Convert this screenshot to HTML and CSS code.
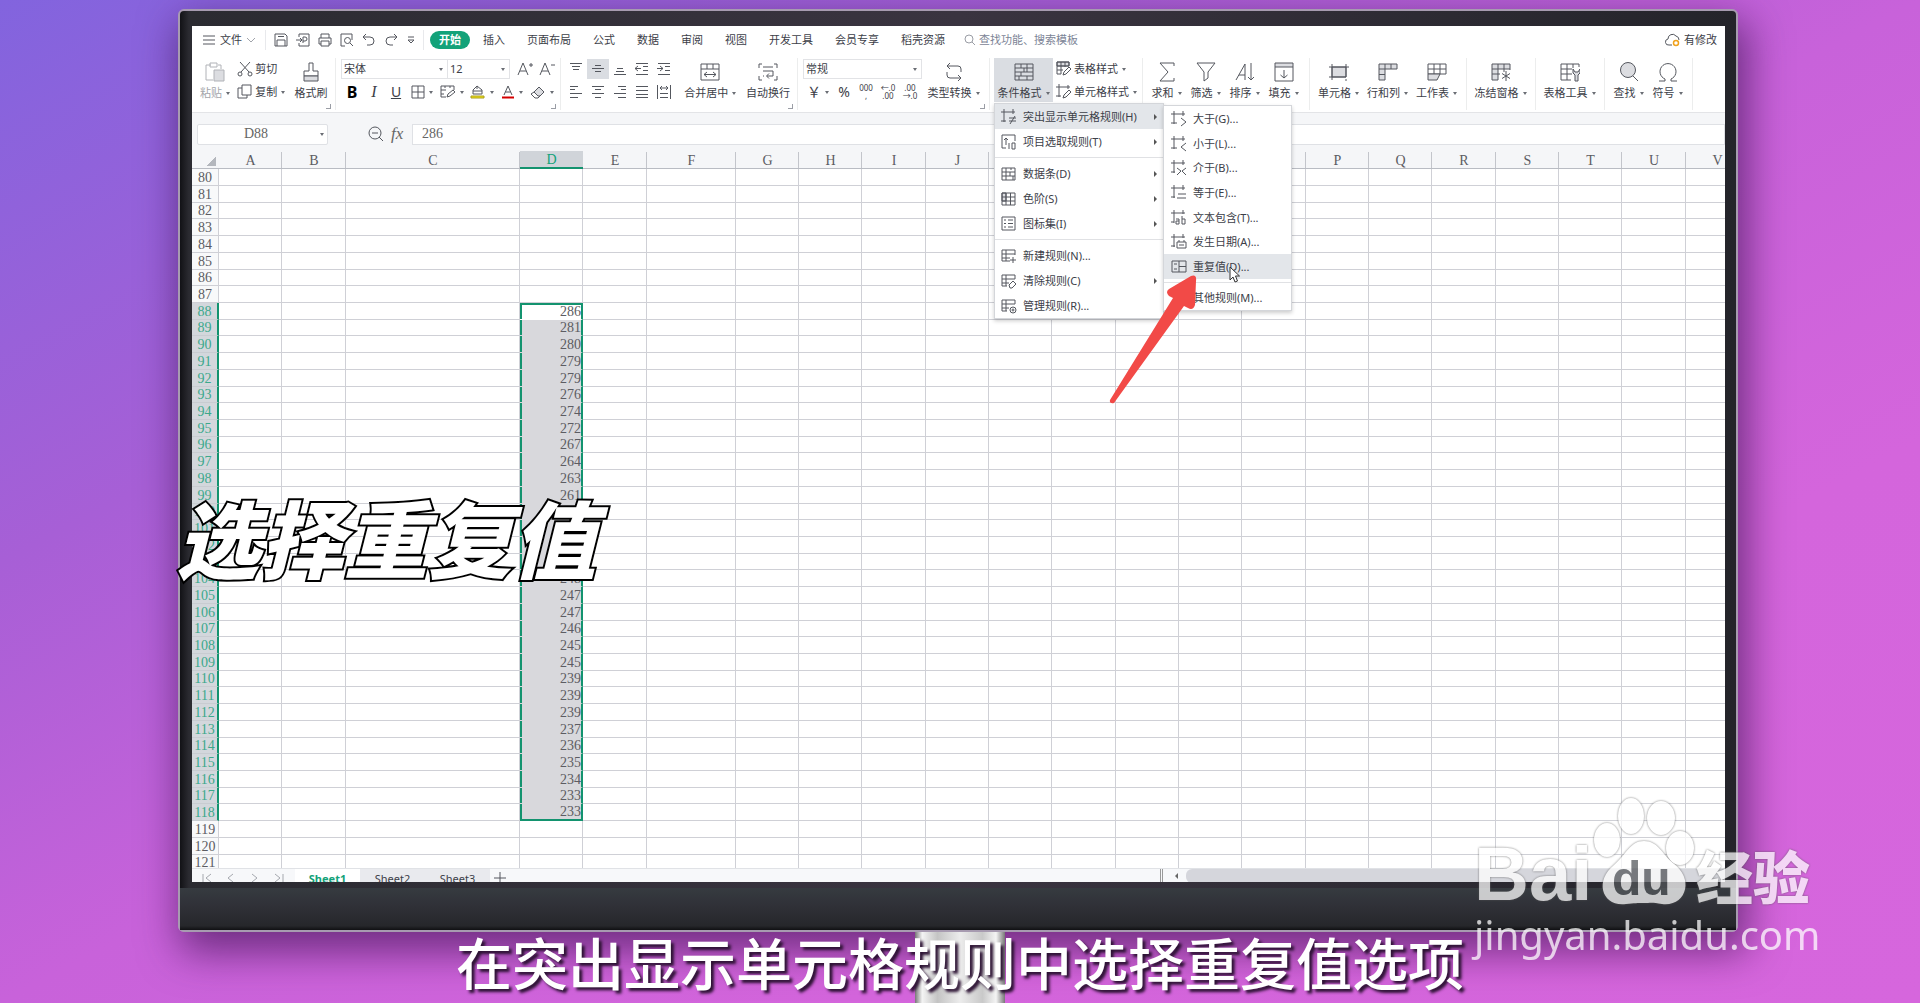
FILE: index.html
```html
<!DOCTYPE html>
<html lang="zh-CN">
<head>
<meta charset="utf-8">
<title>突出显示单元格规则</title>
<link rel="stylesheet" href="styles.css">
</head>
<body>
<svg class="sprite" aria-hidden="true">
  <symbol id="menu" viewBox="0 0 14 14"><path d="M1 3h12M1 7h12M1 11h12"/></symbol>
  <symbol id="chev" viewBox="0 0 10 10"><path d="M1 3l4 4 4-4"/></symbol>
  <symbol id="save" viewBox="0 0 14 14"><path d="M1 1h10l2 2v10H1zM3 13V7h8v6M4 3.500h6"/></symbol>
  <symbol id="pdf" viewBox="0 0 14 14"><path d="M3 4V1h10v12H3v-3M0 7h6M4 5l2 2-2 2M7 10V4h2a2 2 0 010 4H7"/></symbol>
  <symbol id="print" viewBox="0 0 14 14"><path d="M3 5V1h8v4M3 11H1V5h12v6h-2M3 8h8v5H3z"/></symbol>
  <symbol id="preview" viewBox="0 0 14 14"><path d="M5 13H1V1h11v6"/><circle cx="7.500" cy="7.500" r="3"/><path d="M10 10l3 3"/></symbol>
  <symbol id="undo" viewBox="0 0 14 14"><path d="M4 1L1 4l3 3M1 4h7a4 4 0 010 8H5"/></symbol>
  <symbol id="redo" viewBox="0 0 14 14"><path d="M10 1l3 3-3 3M13 4H6a4 4 0 000 8h3"/></symbol>
  <symbol id="more" viewBox="0 0 10 10"><path d="M2 2h6M2 5l3 3 3-3z"/></symbol>
  <symbol id="search" viewBox="0 0 12 12"><circle cx="5" cy="5" r="4"/><path d="M8 8l3 3"/></symbol>
  <symbol id="cloud" viewBox="0 0 16 14"><path d="M7 12H4a3 3 0 01-1-6 4.500 4.500 0 018-3 4 4 0 013 4"/><circle cx="11" cy="10" r="2.500" stroke="#f0a21c" stroke-width="1.500"/></symbol>
  <symbol id="paste" viewBox="0 0 20 20"><path d="M6 3H1v15h7M13 3h3v4M5 1h7v4H5z"/><path class="shade" d="M9 8h10v11H9z"/></symbol>
  <symbol id="cut" viewBox="0 0 16 16"><path d="M3 1l9 10M13 1L4 11"/><circle cx="3" cy="13" r="2"/><circle cx="13" cy="13" r="2"/></symbol>
  <symbol id="copy" viewBox="0 0 16 16"><path d="M5 1h9v10H5zM5 4H1v10h9v-3"/></symbol>
  <symbol id="brush" viewBox="0 0 20 20"><path d="M8 1h4v8h5v5H3V9h5z"/><path class="shade" d="M3 14h14v5H3z"/></symbol>
  <symbol id="table" viewBox="0 0 14 14"><path d="M1 1h12v12H1zM7 1v12M1 7h12"/></symbol>
  <symbol id="cellpen" viewBox="0 0 16 14"><path d="M6 12H1V1h13v4M1 5h5M5 1v2M10 1v2M1 9h3M7 12l1-3 5-4 2 2-5 4z"/></symbol>
  <symbol id="fill" viewBox="0 0 16 14"><path d="M3 8V5l4-4 5 4v4H3zM7 1v3M3 6h9"/><path d="M1 11h13v2H1z" fill="#f5e614" stroke="#a99d20"/></symbol>
  <symbol id="fontcolor" viewBox="0 0 14 14"><path d="M3 10l4-9 4 9M4.500 7h5"/><path d="M1 12.500h12" stroke="#d40000" stroke-width="2"/></symbol>
  <symbol id="eraser" viewBox="0 0 16 14"><path class="shade" d="M4 7l5-5 5 5-4 4H8z"/><path d="M4 7l-3 2 4 4h3l2-2"/></symbol>
  <symbol id="bigA" viewBox="0 0 16 14"><path d="M1 13L6 1l5 12M3 9h6M12 3h4M14 1v4"/></symbol>
  <symbol id="smallA" viewBox="0 0 16 14"><path d="M1 13L6 1l5 12M3 9h6M12 3h4"/></symbol>
  <symbol id="al-top" viewBox="0 0 14 14"><path d="M1 1.500h12M3 4.500h8M4 7.500h6"/></symbol>
  <symbol id="al-mid" viewBox="0 0 14 14"><path d="M4 3.500h6M1 6.500h12M4 9.500h6"/></symbol>
  <symbol id="al-bot" viewBox="0 0 14 14"><path d="M4 6.500h6M3 9.500h8M1 12.500h12"/></symbol>
  <symbol id="ind-l" viewBox="0 0 14 14"><path d="M1 1.500h12M8 4.500h5M8 8.500h5M1 12.500h12M0 6.500h6M3 4L0 6.500 3 9"/></symbol>
  <symbol id="ind-r" viewBox="0 0 14 14"><path d="M1 1.500h12M8 4.500h5M8 8.500h5M1 12.500h12M0 6.500h6M3 4l3 2.500L3 9"/></symbol>
  <symbol id="left" viewBox="0 0 14 14"><path d="M1 1.500h8M1 4.500h5M1 8.500h12M1 12.500h8"/></symbol>
  <symbol id="center" viewBox="0 0 14 14"><path d="M1 1.500h12M4 4.500h6M1 8.500h12M4 12.500h6"/></symbol>
  <symbol id="right" viewBox="0 0 14 14"><path d="M5 1.500h8M8 4.500h5M1 8.500h12M5 12.500h8"/></symbol>
  <symbol id="just" viewBox="0 0 14 14"><path d="M1 1.500h12M1 5.500h12M1 9.500h12M1 12.500h12"/></symbol>
  <symbol id="dist" viewBox="0 0 14 14"><path d="M.5 0v14M13.500 0v14M3 3h8M5 1L3 3l2 2M9 1l2 2-2 2M3 8.500h8M3 12.500h8"/></symbol>
  <symbol id="merge" viewBox="0 0 20 20"><path d="M1 2h18v16H1zM1 7h18M7 2v5M13 2v5M4 12.500h12M7 10l-3 2.500L7 15M13 10l3 2.500-3 2.500"/></symbol>
  <symbol id="wrap" viewBox="0 0 20 20"><path d="M1 6V2h3M16 2h3v4M1 14v4h3M16 18h3v-4M5 5h10M5 9h10v5H9M11 11.500L8.500 14l2.500 2.500M5 14h1"/></symbol>
  <symbol id="convert" viewBox="0 0 20 20"><path d="M6 1L3 4l3 3M3 4h11a3 3 0 013 3v3M14 19l3-3-3-3M17 16H6a3 3 0 01-3-3v-3"/></symbol>
  <symbol id="cond" viewBox="0 0 20 20"><path d="M1 2h18v16H1zM1 6h18M1 10h18M1 14h18M7 2v4M13 2v8M7 10v4M13 14v4M10 6v4M5 14v4"/></symbol>
  <symbol id="tstyle" viewBox="0 0 16 16"><path class="shade" d="M1 1h12v4H1z"/><path d="M5 13H1V1h12v4M1 5h12M1 9h6M5 1v12M9 1v5M7 14l1-3 5-5 2 2-5 5z"/></symbol>
  <symbol id="cstyle" viewBox="0 0 16 16"><path d="M0 3h14M3 0v13M12 1v4M0 12h5M7 14l1-3 5-5 2 2-5 5z"/></symbol>
  <symbol id="sum" viewBox="0 0 20 20"><path d="M17 4V1H3l8 9-8 9h14v-3"/></symbol>
  <symbol id="filter" viewBox="0 0 20 20"><path d="M1 1h18l-7 9v6l-4 3v-9z"/></symbol>
  <symbol id="sort" viewBox="0 0 20 20"><path d="M1 18L10 2v16M4 13h6M16 1v17M13 15l3 3 3-3"/></symbol>
  <symbol id="down" viewBox="0 0 20 20"><path class="shade" d="M1 1h18v4H1z"/><path d="M1 5v14h18V5M10 8v8M6.500 13l3.500 3 3.500-3"/></symbol>
  <symbol id="cell" viewBox="0 0 20 20"><path class="shade" d="M3 5h14v10H3z"/><path d="M0 5h20M0 15h17M3 2v16M17 2v13M17 17v2"/></symbol>
  <symbol id="rowcol" viewBox="0 0 20 20"><path class="shade" d="M1 2h18v5H7v11H1z"/><path d="M1 7h6V2M13 2v5M1 12.500h6"/></symbol>
  <symbol id="sheet" viewBox="0 0 20 20"><path d="M1 2h18v10H1zM7 2v10M13 2v10M1 7h18"/><path class="shade" d="M1 12h12l-3 6H1z"/></symbol>
  <symbol id="freeze" viewBox="0 0 20 20"><path class="shade" d="M1 2h18v5H7v11H1z"/><path d="M1 7h6V2M13 2v8M1 12h8M19 7v1M15 9v10M11 11.500l8 5M19 11.500l-8 5"/></symbol>
  <symbol id="ttool" viewBox="0 0 20 20"><path d="M11 18H1V2h18v3M1 7h11M1 12h11M7 2v16M13 2v4"/><path class="shade" d="M13 7v4l2 2v6h3v-6l2-2V7l-2 3h-3z"/></symbol>
  <symbol id="find" viewBox="0 0 20 20"><circle class="shade" cx="9" cy="8" r="7.500"/><path d="M14 14l5 5"/></symbol>
  <symbol id="omega" viewBox="0 0 20 20"><path d="M1 19h6v-2a8 8 0 116 0v2h6"/></symbol>
  <symbol id="zoomout" viewBox="0 0 16 16"><circle cx="7" cy="7" r="6"/><path d="M11 11l4 4M4 7h6"/></symbol>
  <symbol id="m-hl" viewBox="0 0 16 16"><path d="M0 3h14M3 0v13M12 0v5M0 12h5M8 9h7M8 12h7M14 7l-5 8"/></symbol>
  <symbol id="m-top" viewBox="0 0 16 16"><path d="M5 14H1V1h13v6M5 11V4M3 6l2-2 2 2M8 9v6M11 9h3v6h-3z"/></symbol>
  <symbol id="m-bar" viewBox="0 0 16 16"><path d="M1 2h13v12H1zM1 6h13M1 10h13M5 2v12M9 6v4M10 2v2M12 10v4"/></symbol>
  <symbol id="m-scale" viewBox="0 0 16 16"><path class="shade" d="M1 2h4v8H1z"/><path d="M1 2h13v12H1zM1 6h13M1 10h13M5 2v12M9.500 2v12"/></symbol>
  <symbol id="m-icons" viewBox="0 0 16 16"><path d="M1 1h13v13H1zM3 4h2M3 7.500h2M3 11h2M7 4h5M7 7.500h5M7 11h5"/></symbol>
  <symbol id="m-new" viewBox="0 0 16 16"><path d="M9 13H1V2h13v5M1 6h13M1 10h8M5 2v11M12 9v6M9 12h6"/></symbol>
  <symbol id="m-clear" viewBox="0 0 16 16"><path d="M6 13H1V2h13v4M1 6h13M1 10h7M5 2v11M8 12l4-4 3 3-4 4H9z"/></symbol>
  <symbol id="m-mgr" viewBox="0 0 16 16"><path d="M6 13H1V2h13v4M1 6h13M1 10h7M5 2v11"/><circle cx="12" cy="12" r="3"/><circle cx="12" cy="12" r="1"/></symbol>
  <symbol id="s-gt" viewBox="0 0 16 16"><path d="M0 3h14M3 0v13M12 0v5M0 12h6M10 7l5 4-5 4"/></symbol>
  <symbol id="s-lt" viewBox="0 0 16 16"><path d="M0 3h14M3 0v13M12 0v5M0 12h6M15 7l-5 4 5 4"/></symbol>
  <symbol id="s-bt" viewBox="0 0 16 16"><path d="M0 3h14M3 0v13M12 0v5M0 12h4M6 8l4 3-4 4M15 8l-4 3 4 4"/></symbol>
  <symbol id="s-eq" viewBox="0 0 16 16"><path d="M0 3h14M3 0v13M12 0v5M0 12h4M7 9h8M6 13h9"/></symbol>
  <symbol id="s-ab" viewBox="0 0 16 16"><path d="M0 3h14M3 0v13M12 0v4M0 12h3M5 9h3v5H5v-3h3M11 6v8h3V9h-3"/></symbol>
  <symbol id="s-date" viewBox="0 0 16 16"><path d="M0 3h14M3 0v13M12 0v4M0 12h4M6 8h9v6H6zM8 6v2M13 6v2M8 11h5"/></symbol>
  <symbol id="s-dup" viewBox="0 0 16 16"><path d="M1 2h14v11H1zM8 2v11M8 7.500h7M3 5h3M3 10h3"/></symbol>
</svg>

<main class="stage">
  <section class="monitor">
    <div class="screen">
      <header class="tabbar">
        <button class="file"><svg class="i14"><use href="#menu"/></svg>文件<svg class="i10 dim"><use href="#chev"/></svg></button>
        <div class="quick">
          <button aria-label="保存"><svg class="i14"><use href="#save"/></svg></button>
          <button aria-label="输出为PDF"><svg class="i14"><use href="#pdf"/></svg></button>
          <button aria-label="打印"><svg class="i14"><use href="#print"/></svg></button>
          <button aria-label="打印预览"><svg class="i14"><use href="#preview"/></svg></button>
          <button aria-label="撤销"><svg class="i14"><use href="#undo"/></svg></button>
          <button aria-label="恢复"><svg class="i14"><use href="#redo"/></svg></button>
          <button aria-label="更多"><svg class="i10"><use href="#more"/></svg></button>
        </div>
        <nav class="tabs">
          <button class="active">开始</button><button>插入</button><button>页面布局</button><button>公式</button><button>数据</button><button>审阅</button><button>视图</button><button>开发工具</button><button>会员专享</button><button>稻壳资源</button>
        </nav>
        <label class="search"><svg class="i12"><use href="#search"/></svg><input type="text" placeholder="查找功能、搜索模板" aria-label="查找功能、搜索模板"></label>
        <button class="changed"><svg class="cloud"><use href="#cloud"/></svg>有修改</button>
      </header>

      <div class="ribbon">
        <div class="group g-clip corner">
          <button class="big w2 muted"><svg class="i20"><use href="#paste"/></svg><span class="drop">粘贴</span></button>
          <div class="rows">
            <button class="small"><svg class="i16"><use href="#cut"/></svg>剪切</button>
            <button class="small"><svg class="i16"><use href="#copy"/></svg><span class="drop">复制</span></button>
          </div>
          <button class="big w3"><svg class="i20"><use href="#brush"/></svg><span>格式刷</span></button>
        </div>
        <div class="group g-font corner">
          <div class="rows">
            <div class="line">
              <label class="pick font"><select aria-label="字体"><option>宋体</option></select></label><label class="pick size"><select aria-label="字号"><option>12</option></select></label>
              <button class="tool a-up" aria-label="增大字号"><svg class="i16x14"><use href="#bigA"/></svg></button>
              <button class="tool" aria-label="减小字号"><svg class="i16x14"><use href="#smallA"/></svg></button>
            </div>
            <div class="line">
              <button class="tool bold">B</button><button class="tool italic">I</button><button class="tool under">U</button>
              <button class="tool drop w30" aria-label="边框"><svg class="i14"><use href="#table"/></svg></button>
              <button class="tool drop w30" aria-label="单元格样式"><svg class="i16x14"><use href="#cellpen"/></svg></button>
              <button class="tool drop w30" aria-label="填充颜色"><svg class="i16x14"><use href="#fill"/></svg></button>
              <button class="tool drop w30" aria-label="字体颜色"><svg class="i14"><use href="#fontcolor"/></svg></button>
              <button class="tool drop w30" aria-label="清除"><svg class="i16x14"><use href="#eraser"/></svg></button>
            </div>
          </div>
        </div>
        <div class="group g-align corner">
          <div class="rows">
            <div class="line">
              <button class="tool" aria-label="顶端对齐"><svg class="i14"><use href="#al-top"/></svg></button>
              <button class="tool on" aria-label="垂直居中"><svg class="i14"><use href="#al-mid"/></svg></button>
              <button class="tool" aria-label="底端对齐"><svg class="i14"><use href="#al-bot"/></svg></button>
              <button class="tool" aria-label="减少缩进"><svg class="i14"><use href="#ind-l"/></svg></button>
              <button class="tool" aria-label="增加缩进"><svg class="i14"><use href="#ind-r"/></svg></button>
            </div>
            <div class="line">
              <button class="tool" aria-label="左对齐"><svg class="i14"><use href="#left"/></svg></button>
              <button class="tool" aria-label="居中"><svg class="i14"><use href="#center"/></svg></button>
              <button class="tool" aria-label="右对齐"><svg class="i14"><use href="#right"/></svg></button>
              <button class="tool" aria-label="两端对齐"><svg class="i14"><use href="#just"/></svg></button>
              <button class="tool" aria-label="分散对齐"><svg class="i14"><use href="#dist"/></svg></button>
            </div>
          </div>
          <button class="big w4"><svg class="i20"><use href="#merge"/></svg><span class="drop">合并居中</span></button>
          <button class="big w4"><svg class="i20"><use href="#wrap"/></svg><span>自动换行</span></button>
        </div>
        <div class="group g-num corner">
          <div class="rows">
            <div class="line"><label class="pick num"><select aria-label="数字格式"><option>常规</option></select></label></div>
            <div class="line">
              <button class="tool drop w30 yen">￥</button><button class="tool pct">%</button><button class="tool mini">000<br>,</button><button class="tool mini">←.0<br>.00</button><button class="tool mini">.00<br>→.0</button>
            </div>
          </div>
          <button class="big w4"><svg class="i20"><use href="#convert"/></svg><span class="drop">类型转换</span></button>
        </div>
        <div class="group g-style">
          <button class="big w4 on" aria-expanded="true"><svg class="i20"><use href="#cond"/></svg><span class="drop">条件格式</span></button>
          <div class="rows">
            <button class="small"><svg class="i16"><use href="#tstyle"/></svg><span class="drop">表格样式</span></button>
            <button class="small"><svg class="i16"><use href="#cstyle"/></svg><span class="drop">单元格样式</span></button>
          </div>
        </div>
        <div class="group g-edit">
          <button class="big w2"><svg class="i20"><use href="#sum"/></svg><span class="drop">求和</span></button>
          <button class="big w2"><svg class="i20"><use href="#filter"/></svg><span class="drop">筛选</span></button>
          <button class="big w2"><svg class="i20"><use href="#sort"/></svg><span class="drop">排序</span></button>
          <button class="big w2"><svg class="i20"><use href="#down"/></svg><span class="drop">填充</span></button>
        </div>
        <div class="group g-cells">
          <button class="big w3"><svg class="i20"><use href="#cell"/></svg><span class="drop">单元格</span></button>
          <button class="big w3"><svg class="i20"><use href="#rowcol"/></svg><span class="drop">行和列</span></button>
          <button class="big w3"><svg class="i20"><use href="#sheet"/></svg><span class="drop">工作表</span></button>
        </div>
        <div class="group g-one">
          <button class="big w4"><svg class="i20"><use href="#freeze"/></svg><span class="drop">冻结窗格</span></button>
        </div>
        <div class="group g-one">
          <button class="big w4"><svg class="i20"><use href="#ttool"/></svg><span class="drop">表格工具</span></button>
        </div>
        <div class="group g-find">
          <button class="big w2"><svg class="i20"><use href="#find"/></svg><span class="drop">查找</span></button>
          <button class="big w2"><svg class="i20"><use href="#omega"/></svg><span class="drop">符号</span></button>
        </div>
      </div>

      <div class="formula">
        <label class="namebox"><input type="text" value="D88" aria-label="名称框"></label>
        <svg class="i16 lens"><use href="#zoomout"/></svg>
        <span class="fx">fx</span>
        <input class="finput" type="text" value="286" aria-label="编辑栏">
      </div>

      <div class="gridwrap"><table class="grid" id="grid"></table></div>

      <footer class="sheets">
        <div class="nav">
          <button aria-label="第一个"><svg class="i10"><path d="M1 1v9M9 1L4 5l5 4"/></svg></button>
          <button aria-label="上一个"><svg class="i10"><path d="M7 1L2 5l5 4"/></svg></button>
          <button aria-label="下一个"><svg class="i10"><path d="M2 1l5 4-5 4"/></svg></button>
          <button aria-label="最后一个"><svg class="i10"><path d="M9 1v9M1 1l5 4-5 4"/></svg></button>
        </div>
        <button class="tab current">Sheet1</button><button class="tab">Sheet2</button><button class="tab">Sheet3</button>
        <button class="add" aria-label="新建工作表"><svg class="i12"><path d="M6 0v12M0 6h12"/></svg></button>
        <div class="hscroll"><span class="arrow"></span><span class="thumb"></span></div>
      </footer>

      <ul class="menu main">
        <li class="hot"><svg class="i16"><use href="#m-hl"/></svg>突出显示单元格规则(H)<i></i></li>
        <li><svg class="i16"><use href="#m-top"/></svg>项目选取规则(T)<i></i></li>
        <li class="sep"></li>
        <li><svg class="i16"><use href="#m-bar"/></svg>数据条(D)<i></i></li>
        <li><svg class="i16"><use href="#m-scale"/></svg>色阶(S)<i></i></li>
        <li><svg class="i16"><use href="#m-icons"/></svg>图标集(I)<i></i></li>
        <li class="sep"></li>
        <li><svg class="i16"><use href="#m-new"/></svg>新建规则(N)...</li>
        <li><svg class="i16"><use href="#m-clear"/></svg>清除规则(C)<i></i></li>
        <li><svg class="i16"><use href="#m-mgr"/></svg>管理规则(R)...</li>
      </ul>
      <ul class="menu sub">
        <li><svg class="i16"><use href="#s-gt"/></svg>大于(G)...</li>
        <li><svg class="i16"><use href="#s-lt"/></svg>小于(L)...</li>
        <li><svg class="i16"><use href="#s-bt"/></svg>介于(B)...</li>
        <li><svg class="i16"><use href="#s-eq"/></svg>等于(E)...</li>
        <li><svg class="i16"><use href="#s-ab"/></svg>文本包含(T)...</li>
        <li><svg class="i16"><use href="#s-date"/></svg>发生日期(A)...</li>
        <li class="hot"><svg class="i16"><use href="#s-dup"/></svg>重复值(D)...</li>
        <li class="sep"></li>
        <li><svg class="i16"></svg>其他规则(M)...</li>
      </ul>
      <svg class="pointer" viewBox="0 0 100 132" aria-hidden="true"><path d="M1 125L64 23 60 21Q56 17 60 14L82 1Q88-1 87 6L86 30Q84 36 79 33L75 31 5 128Q0 129 1 125Z"/></svg>
      <svg class="cursor" viewBox="0 0 12 18" aria-hidden="true"><path d="M1 1v13l3-3 2 5 2.500-1-2-5h4z"/></svg>
    </div>
    <div class="chin"></div>
  </section>
  <div class="stand"></div>

  <h1 class="headline">选择重复值</h1>
  <p class="caption">在突出显示单元格规则中选择重复值选项</p>
  <div class="brand">
    <div class="logo">
      <span class="bai">Bai</span>
      <span class="paw"><svg viewBox="0 0 90 94" aria-hidden="true"><ellipse cx="9" cy="43" rx="13" ry="17"/><ellipse cx="33" cy="19" rx="13" ry="18"/><ellipse cx="63" cy="21" rx="14" ry="17"/><ellipse cx="82" cy="51" rx="14" ry="17"/><path d="M46 44C60 44 64 57 75 66 97 82 88 110 64 107 54 105 52 106 46 106 40 106 36 106 28 107 4 110-4 84 16 68 28 58 32 44 46 44Z"/></svg><span class="du">du</span></span>
      <span class="jy">经验</span>
    </div>
    <div class="site">jingyan.baidu.com</div>
  </div>
</main>
<script src="grid.js"></script>
</body>
</html>
```

FILE: grid.js
```js
const columns = [...'ABCDEFGHIJKLMNOPQRSTUV'];
const widths = [63, 64, 174, 63, 64, 89, 63, 63, 64, 63, 63, 64, 63, 63, 64, 63, 63, 64, 63, 63, 64, 63];
const values = [286, 281, 280, 279, 279, 276, 274, 272, 267, 264, 263, 261, 259, 255, 253, 250, 248,
  247, 247, 246, 245, 245, 239, 239, 239, 237, 236, 235, 234, 233, 233];
const first = 88;
const last = first + values.length - 1;

let html = '<colgroup><col class="rowhead">' + widths.map(w => `<col style="width:${w}px">`).join('') + '</colgroup>';
html += '<thead><tr><th class="all"></th>' +
  columns.map(c => `<th scope="col"${c === 'D' ? ' class="picked"' : ''}>${c}</th>`).join('') + '</tr></thead><tbody>';
for (let r = 80; r <= 121; r++) {
  const inside = r >= first && r <= last;
  html += `<tr><th scope="row"${inside ? ' class="picked"' : ''}>${r}</th>`;
  for (const c of columns) {
    if (c === 'D' && inside) {
      const edge = r === first ? ' first' : r === last ? ' last' : '';
      html += `<td class="sel${edge}">${values[r - first]}</td>`;
    } else {
      html += '<td></td>';
    }
  }
  html += '</tr>';
}
document.getElementById('grid').innerHTML = html + '</tbody>';
```

FILE: styles.css
```css
* { box-sizing: border-box; }
body { margin: 0; font: 11px/14px "Noto Sans", "Noto Sans CJK SC", sans-serif; color: #3c4048; }
button, input, select { font: inherit; color: inherit; border: 0; background: none; padding: 0; margin: 0; }
button { display: flex; align-items: center; white-space: nowrap; }
svg { fill: none; stroke: #54575e; stroke-width: 1; flex: none; display: block; }
.sprite { position: absolute; width: 0; height: 0; }
.shade { fill: #dcdde1; }
.i10 { width: 10px; height: 10px; }
.i12 { width: 12px; height: 12px; }
.i14 { width: 14px; height: 14px; }
.i16 { width: 16px; height: 16px; }
.i20 { width: 20px; height: 20px; overflow: visible; }
.i16x14 { width: 16px; height: 14px; }
.dim { stroke: #a0a3aa; }

.stage {
  position: relative; min-height: 100vh; overflow: hidden; padding-top: 9px;
  background: linear-gradient(to bottom right, #8264de 0%, #a75fd6 28%, #c862da 50%, #d465dc 72%, #d666dd 100%);
}
.monitor {
  margin: 0 182px 0 178px; padding: 15px 11px 0 12px;
  border: 2px solid #a79bb0; border-radius: 6px;
  background: linear-gradient(90deg, #121216, #2b2b31 9px, #3a3440 50%, #24242a);
  box-shadow: 6px 16px 40px 4px rgba(50, 10, 70, .6);
}
.chin { height: 42px; margin: 6px -11px 0 -12px; background: linear-gradient(#363b40, #303138 40%, #26272b 90%, #101013); }
.stand { width: 90px; height: 71px; margin: 0 auto; background: linear-gradient(90deg, #777, #f4f4f4 8%, #c4c4c4 25%, #ececec 50%, #c9c9c9 75%, #f4f4f4 90%, #777); }
.screen { position: relative; overflow: hidden; background: #fff; }

.tabbar { display: flex; align-items: center; height: 28px; padding: 0 8px 0 10px; }
.file { gap: 4px; width: 63px; }
.quick { display: flex; align-items: center; gap: 8px; width: 159px; height: 20px; padding-left: 8px; border-left: 1px solid #e8e9ec; border-right: 1px solid #e8e9ec; }
.tabs { display: flex; align-items: center; gap: 22px; padding-left: 6px; }
.tabs .active { height: 18px; padding: 0 9px; border-radius: 9px; background: #13a279; color: #fff; font-weight: 700; margin-right: -9px; }
.search { display: flex; align-items: center; gap: 3px; margin-left: 19px; }
.search svg { stroke: #9a9da5; }
.search input { width: 110px; }
.search input::placeholder { color: #7c8496; opacity: 1; }
.changed { margin-left: auto; gap: 3px; }
.cloud { width: 16px; height: 14px; }

.ribbon { display: flex; height: 59px; padding-top: 4px; border-bottom: 1px solid #e3e4e7; white-space: nowrap; }
.group { position: relative; display: flex; flex: none; height: 52px; border-right: 1px solid #eceded; }
.corner::after { content: ""; position: absolute; right: 4px; bottom: 1px; width: 4px; height: 4px; border: solid #9a9da5; border-width: 0 1px 1px 0; }
.rows { display: flex; flex-direction: column; gap: 3px; padding-top: 1px; }
.rows > * { height: 20px; }
.line { display: flex; align-items: center; }
.big { flex-direction: column; height: 44px; padding-top: 4px; gap: 4px; }
.w2 { width: 39px; }
.w3 { width: 49px; }
.w4 { width: 59px; }
.small { gap: 2px; }
.muted { color: #a3a5aa; }
.muted svg { stroke: #b0b2b7; }
.drop { display: flex; align-items: center; justify-content: center; gap: 4px; }
.drop::after, .pick::after, .namebox::after { content: ""; border: solid transparent; border-width: 3px 2px 0; border-top-color: #6a6d74; }
.on { background: #dadde2; }
.tool { width: 22px; height: 20px; justify-content: center; }
.w30 { width: 30px; }
.pick { display: flex; align-items: center; height: 20px; border: 1px solid #e2e3e6; padding-right: 4px; }
.pick select { flex: 1; min-width: 0; height: 18px; padding-left: 2px; appearance: none; }
.font { width: 107px; }
.size { width: 62px; border-left: 0; }
.num { width: 119px; }
.a-up { margin-left: 4px; }
.bold { font: 700 16px/20px "Noto Sans", sans-serif; color: #000; }
.italic { font: italic 16px/20px "Liberation Serif", serif; }
.under { font-size: 14px; text-decoration: underline; }
.yen { font-size: 14px; }
.pct { font-size: 14px; }
.mini { font-size: 8px; line-height: 8px; }

.g-clip { width: 144px; padding-left: 4px; }
.g-clip .rows { width: 54px; padding-left: 3px; }
.g-font { width: 225px; padding-left: 5px; }
.g-align { width: 237px; padding-left: 4px; }
.g-align .rows { width: 119px; }
.g-num { width: 192px; padding-left: 5px; }
.g-num .rows { width: 121px; }
.g-style { width: 153px; padding-left: 4px; }
.g-style .rows { padding-left: 3px; }
.g-edit { width: 167px; padding-left: 4px; }
.g-cells { width: 157px; padding-left: 4px; }
.g-one { width: 69px; padding-left: 4px; }
.g-find { width: 88px; padding-left: 4px; }

.formula { display: flex; align-items: center; height: 33px; padding: 10px 0 1px 5px; background: #f5f6f8; font: 14px/18px "Liberation Serif", serif; color: #666; }
.namebox { display: flex; align-items: center; width: 131px; height: 21px; padding-right: 3px; border: 1px solid #dfe1e5; border-radius: 2px; background: #fff; }
.namebox input { flex: 1; min-width: 0; padding-right: 6px; text-align: center; }
.lens { margin-left: 40px; }
.fx { width: 28px; padding-left: 7px; font: italic 17px/18px "Liberation Serif", serif; }
.finput { flex: 1; height: 21px; padding-left: 9px; border: 1px solid #dfe1e5; background: #fff; }

.gridwrap { overflow: hidden; }
.grid { width: 1557px; table-layout: fixed; border-collapse: separate; border-spacing: 0; font: 14px/15px "Liberation Serif", serif; color: #5c5c62; }
.rowhead { width: 27px; }
.grid th, .grid td { height: 17px; padding: 0; border: solid #cfd0d6; border-width: 0 1px 1px 0; font-weight: 400; text-align: center; overflow: hidden; }
.grid tbody tr:nth-child(7n) > *, .grid tbody tr:nth-child(7n+3) > * { height: 16px; }
.grid thead th { height: 23px; border-right: 0; border-bottom-color: #b9bcc3; vertical-align: bottom; background: linear-gradient(#c3c5cb, #c3c5cb) right bottom / 1px 16px no-repeat, #f5f6f8; }
.grid thead .all { background: linear-gradient(135deg, transparent 50%, #b4b7bd 50%) 15px 11px / 9px 9px no-repeat, #f5f6f8; }
.grid thead .picked { color: #13a279; background: linear-gradient(#d0d4d9, #d0d4d9) bottom / 100% 16px no-repeat, #f5f6f8; border-bottom: 2px solid #13936f; }
.grid tbody th { background: #f8f9fa; }
.grid tbody .picked { color: #3ba88b; background: #d3d7dc; border-right: 2px solid #13936f; border-bottom-color: #c8ccd1; }
.grid .sel { background: #d8d8dc; text-align: right; border-bottom-color: transparent; border-right: 2px solid #13936f; box-shadow: inset 2px 0 #13936f; }
.grid .first { background: #fff; box-shadow: inset 2px 2px #13936f; }
.grid .last { border-bottom: 2px solid #13936f; }

.sheets { position: relative; display: flex; height: 14px; margin-top: -3px; overflow: hidden; border-top: 1px solid #e0e2e6; background: #f7f8fa; font: 11px/20px "Noto Sans", sans-serif; }
.nav { display: flex; align-items: flex-start; gap: 14px; width: 103px; padding: 4px 0 0 10px; }
.nav svg { stroke: #a5a8ae; }
.tab { width: 65px; height: 20px; justify-content: center; background: #e9eaee; }
.current { background: #fff; color: #13a279; font-weight: 700; }
.add { width: 30px; padding: 3px 0 0 4px; align-items: flex-start; }
.hscroll { display: flex; align-items: center; flex: 1; max-width: 565px; margin-left: auto; border-left: 3px double #999; padding: 1px 0 0 12px; gap: 8px; }
.arrow { border: solid transparent; border-width: 3px 3px 3px 0; border-right-color: #666; }
.thumb { flex: 1; height: 14px; border-radius: 6px 0 0 6px; background: #d5d6dc; }

.menu { position: absolute; margin: 0; padding: 0; list-style: none; border: 1px solid #d4d6da; background: #fff; box-shadow: 0 2px 4px rgba(0, 0, 0, .2); white-space: nowrap; }
.menu li { display: flex; align-items: center; gap: 6px; height: 25px; padding-left: 6px; }
.menu .sep { height: 1px; margin: 3px 0; background: #e0e1e4; }
.menu .hot { background: #e3e6ea; }
.menu i { margin: 0 6px 0 auto; border: solid transparent; border-width: 3px 0 3px 3px; border-left-color: #555; }
.main { left: 802px; top: 77px; width: 170px; }
.sub { left: 971px; top: 79px; width: 129px; }
.sub li { padding-left: 7px; }
.sub li:nth-child(3n) { height: 24px; }
.pointer { position: absolute; left: 917px; top: 249px; width: 100px; height: 132px; fill: #f24a47; stroke: none; }
.cursor { position: absolute; left: 1037px; top: 240px; width: 12px; height: 18px; fill: #fff; stroke: #333; }

.headline { position: absolute; left: 176px; top: 476px; margin: 0; font: italic 900 84px/120px "Noto Sans CJK SC", sans-serif; color: #fff; -webkit-text-stroke: 4px #000; paint-order: stroke fill; }
.caption { position: absolute; left: 0; right: 0; bottom: 2px; margin: 0; text-align: center; font: 500 56px/80px "Noto Sans CJK SC", sans-serif; color: #fff; text-shadow: 3px 3px 3px #2c1233; }
.brand { position: absolute; left: 1474px; top: 797px; color: #fff; opacity: .74; }
.logo { display: flex; align-items: flex-end; height: 112px; filter: drop-shadow(0 0 1px #555); }
.bai { width: 124px; font: 700 76px/70px "Liberation Sans", sans-serif; }
.paw { position: relative; width: 98px; height: 112px; }
.paw svg { width: 90px; height: 94px; overflow: visible; fill: #fff; stroke: none; }
.du { position: absolute; left: 14px; bottom: 2px; font: 700 48px/56px "Liberation Sans", sans-serif; color: #55585c; }
.jy { font: 900 57px/70px "Noto Sans CJK SC", sans-serif; }
.site { font: 40px/52px "Noto Sans", sans-serif; }
```
